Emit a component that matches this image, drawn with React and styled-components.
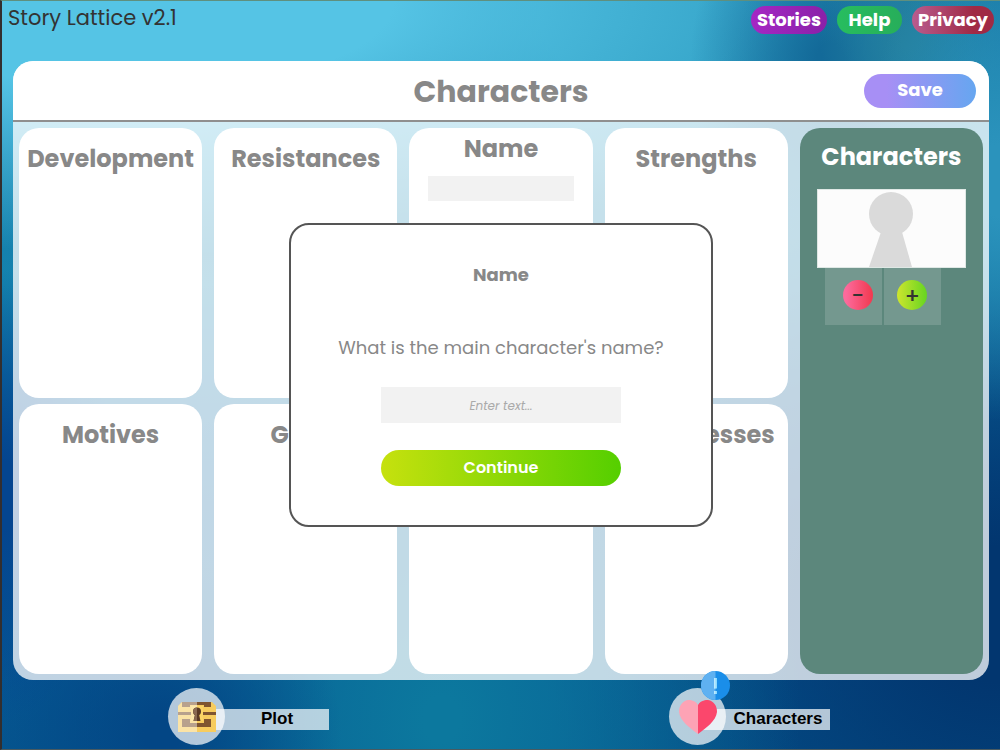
import React, { useState } from 'react'
import styled, { createGlobalStyle } from 'styled-components'

const GlobalStyle = createGlobalStyle`
  * {
    box-sizing: border-box;
  }

  body {
    margin: 0;
    font-family: Poppins, Inter, sans-serif;
    color: #888;
  }

  button, input {
    font-family: inherit;
  }
`

const Page = styled.div`
  position: relative;
  display: flex;
  flex-direction: column;
  min-height: 100vh;
  border: 1px solid #5f8f7e;
  border-left: 2px solid #332e2e;
  border-right: 0;
  border-bottom-color: #4a5a60;
  background:
    radial-gradient(ellipse 14% 32% at 100% 24%, #2b93bc 15%, transparent 100%),
    radial-gradient(ellipse 9% 16% at 91% 5%, #24809f 10%, transparent 100%),
    radial-gradient(ellipse 14% 24% at 83% 8%, #136a99 10%, transparent 100%),
    radial-gradient(ellipse 72% 34% at 14% 0%, #55c4e5 35%, transparent 100%),
    radial-gradient(ellipse 34% 30% at 64% 2%, #2e9dc2 30%, transparent 100%),
    radial-gradient(ellipse 12% 30% at 0% 66%, #04458f 15%, transparent 100%),
    radial-gradient(ellipse 18% 24% at 16% 98%, #034685 10%, transparent 100%),
    radial-gradient(ellipse 36% 60% at 44% 96%, #0c789e 5%, transparent 100%),
    radial-gradient(ellipse 46% 60% at 100% 82%, #02366f 15%, transparent 100%),
    linear-gradient(180deg, #1a7aa6 0%, #1482ae 38%, #06589a 70%, #05568f 100%);
`

const TopBar = styled.header`
  display: flex;
  justify-content: space-between;
  align-items: flex-start;
  height: 60px;
  padding: 5px 6px 0 6px;
`

const Brand = styled.span`
  font-size: 21px;
  line-height: 24px;
  color: #333;
`

const Nav = styled.nav`
  display: flex;
  gap: 10px;
`

const Pill = styled.button`
  min-width: 65px;
  height: 28px;
  padding: 0 6px;
  border: 0;
  border-radius: 14px;
  background: ${({ $bg }) => $bg};
  color: #fff;
  font-size: 18px;
  font-weight: 700;
  line-height: 28px;
  cursor: pointer;
`

const Panel = styled.main`
  flex: 1;
  display: flex;
  flex-direction: column;
  margin: 0 11px;
  border-radius: 20px;
  background: rgba(255, 255, 255, 0.75);
  overflow: hidden;
`

const PanelHeader = styled.div`
  display: grid;
  grid-template-columns: 1fr auto 1fr;
  align-items: center;
  height: 61px;
  padding: 0 13px;
  border-bottom: 2px solid #8f8f8f;
  background: #fff;
`

const PanelTitle = styled.h1`
  grid-column: 2;
  margin: 0;
  padding-top: 2px;
  font-size: 30px;
  font-weight: 700;
  line-height: 36px;
`

const SaveButton = styled.button`
  justify-self: end;
  width: 112px;
  height: 34px;
  padding: 0 0 2px;
  border: 0;
  border-radius: 17px;
  background: linear-gradient(90deg, #a78ff5 20%, #66a6f0);
  color: #fff;
  font-size: 18px;
  font-weight: 700;
  cursor: pointer;
`

const Board = styled.div`
  flex: 1;
  display: grid;
  grid-template-columns: repeat(5, minmax(0, 1fr));
  grid-template-rows: 1fr 1fr;
  gap: 6px 12px;
  padding: 6px;
`

const Card = styled.section`
  display: flex;
  flex-direction: column;
  align-items: center;
  grid-column: ${({ $col }) => $col};
  grid-row: ${({ $tall }) => ($tall ? '1 / 3' : 'auto')};
  padding-top: ${({ $tall }) => ($tall ? '6px' : '16px')};
  border-radius: 20px;
  background: #fff;
`

const CardTitle = styled.h2`
  margin: 0;
  font-size: 24px;
  font-weight: 700;
  line-height: 30px;
`

const NameInput = styled.input`
  width: 80%;
  height: 25px;
  margin-top: 12px;
  border: 0;
  background: #f2f2f2;
  text-align: center;
`

const Roster = styled.aside`
  grid-column: 5;
  grid-row: 1 / 3;
  padding: 14px 17px;
  border-radius: 20px;
  background: #5c877c;
  color: #fff;
`

const RosterTitle = styled(CardTitle)`
  text-align: center;
`

const Portrait = styled.div`
  display: flex;
  justify-content: center;
  height: 79px;
  margin-top: 17px;
  border: 1px solid #dfe8e5;
  background: #fcfcfc;
`

const RosterActions = styled.div`
  display: flex;
  gap: 2px;
  margin-left: 8px;
`

const ActionCell = styled.div`
  display: flex;
  justify-content: center;
  width: 57px;
  height: 57px;
  padding-top: 12px;
  padding-left: ${({ $indent }) => ($indent ? '9px' : '0')};
  background: rgba(255, 255, 255, 0.15);
`

const RoundButton = styled.button`
  width: 30px;
  height: 30px;
  padding: 0;
  border: 0;
  border-radius: 50%;
  background: ${({ $bg }) => $bg};
  color: #333;
  font-size: 22px;
  font-weight: 500;
  line-height: 32px;
  cursor: pointer;
`

const BottomBar = styled.footer`
  display: grid;
  grid-template-columns: 1fr 1fr;
  column-gap: 8px;
  justify-items: center;
  height: 69px;
  padding: 8px 4px 0 0;
`

const Tab = styled.a`
  position: relative;
  display: flex;
  align-items: center;
  width: 161px;
  height: 57px;
  color: #000;
  font-family: "Liberation Sans", Arial, sans-serif;
  font-size: 17px;
  font-weight: 700;
  text-decoration: none;
`

const TabIcon = styled.span`
  flex: none;
  display: flex;
  align-items: center;
  justify-content: center;
  width: 57px;
  height: 57px;
  border-radius: 50%;
  background: rgba(255, 255, 255, 0.7);
`

const TabLabel = styled.span`
  flex: 1;
  height: 21px;
  margin: 5px 0 0 -28px;
  padding-left: 28px;
  background: rgba(255, 255, 255, 0.7);
  line-height: 20px;
  text-align: center;
`

const TabArt = styled.svg`
  position: relative;
  z-index: 1;
`

const Badge = styled.svg`
  position: absolute;
  top: -17px;
  left: 32px;
  z-index: 2;
`

const Overlay = styled.div`
  position: absolute;
  inset: 0;
  display: flex;
  align-items: center;
  justify-content: center;
`

const Modal = styled.form`
  display: flex;
  flex-direction: column;
  align-items: center;
  width: 424px;
  padding: 38px 20px 39px;
  border: 2px solid #555;
  border-radius: 20px;
  background: #fff;
`

const ModalTitle = styled.h3`
  margin: 0;
  font-size: 18px;
  font-weight: 700;
  line-height: 24px;
`

const Question = styled.label`
  margin-top: 49px;
  font-size: 18px;
  line-height: 24px;
`

const Answer = styled.input`
  width: 240px;
  height: 36px;
  margin-top: 27px;
  padding: 2px 0 0;
  border: 0;
  background: #f2f2f2;
  color: #555;
  font-size: 12px;
  text-align: center;

  &::placeholder {
    color: #aaa;
    font-style: italic;
  }
`

const ContinueButton = styled.button`
  width: 240px;
  height: 36px;
  margin-top: 27px;
  padding: 0 0 2px;
  border: 0;
  border-radius: 18px;
  background: linear-gradient(90deg, #c6e10e, #55cf00);
  color: #fff;
  font-size: 16px;
  font-weight: 600;
  cursor: pointer;
`

const KeyholeFigure = () => (
  <svg width="60" height="77" viewBox="0 0 60 77" aria-hidden="true">
    <circle cx="30" cy="24" r="22" fill="#dadada" />
    <path d="M20 42h21l10 35H8z" fill="#dadada" />
  </svg>
)

const ChestIcon = () => (
  <TabArt width="38" height="30" viewBox="0 0 38 30" aria-hidden="true">
    <path d="M4 0h30l4 4v26H0V4z" fill="#f7cc5e" />
    <path d="M4 0h29v5h-7V3H12v2H4z" fill="#7f5530" />
    <path d="M0 10h13v3H0zM25 10h13v3H25z" fill="#7f5530" />
    <path d="M4 17h8v4h14v-4h7v8H4z" fill="#7f5530" />
    <path d="M13 4h12v15H13z" fill="#fbd566" />
    <path d="M4 0h15v30H0V4z" fill="#fff" opacity="0.45" />
    <circle cx="19" cy="9.500" r="4" fill="#5b3a24" />
    <path d="M17.500 10h3l2 9h-7z" fill="#5b3a24" />
    <path d="M19 5.500a4 4 0 0 0-1.800 7.500L15.500 19H19z" fill="#8a6a52" />
  </TabArt>
)

const HeartIcon = () => (
  <TabArt width="38" height="34" viewBox="0 0 38 34" aria-hidden="true">
    <path d="M19 5C16 0 11 0 9 0 3 1 0 6 0 12c1 9 11 16 19 22z" fill="#fda3b5" />
    <path d="M19 5c3-5 8-5 10-5 6 1 9 6 9 12-1 9-11 16-19 22z" fill="#fb476c" />
  </TabArt>
)

const AlertBadge = () => (
  <Badge width="29" height="29" viewBox="0 0 29 29" aria-hidden="true">
    <circle cx="14.5" cy="14.5" r="14.5" fill="#1a8ee9" />
    <path d="M14.500 0a14.500 14.500 0 0 0 0 29z" fill="#5fb1f1" />
    <path d="M13 7h3v10.500h-3zM13 20h3v3h-3z" fill="#8fdcff" />
    <path d="M13 7h1.500v10.500H13zM13 20h1.500v3H13z" fill="#bdeaff" />
  </Badge>
)

export default function App() {
  const [name, setName] = useState('')
  const [answer, setAnswer] = useState('')
  const [asking, setAsking] = useState(true)

  const handleSubmit = (e) => {
    e.preventDefault()
    setName(answer)
    setAsking(false)
  }

  return (
    <>
      <GlobalStyle />
      <Page>
        <TopBar>
          <Brand>Story Lattice v2.1</Brand>
          <Nav>
            <Pill $bg="linear-gradient(90deg, #a527c4, #8a20a8)">Stories</Pill>
            <Pill $bg="linear-gradient(90deg, #27bd5f, #27ae5a)">Help</Pill>
            <Pill $bg="linear-gradient(90deg, #b95c8e, #a02a45 75%)">Privacy</Pill>
          </Nav>
        </TopBar>

        <Panel>
          <PanelHeader>
            <PanelTitle>Characters</PanelTitle>
            <SaveButton>Save</SaveButton>
          </PanelHeader>
          <Board>
            <Card $col={1}>
              <CardTitle>Development</CardTitle>
            </Card>
            <Card $col={2}>
              <CardTitle>Resistances</CardTitle>
            </Card>
            <Card $col={3} $tall>
              <CardTitle>Name</CardTitle>
              <NameInput
                aria-label="Name"
                value={name}
                onChange={(e) => setName(e.target.value)}
              />
            </Card>
            <Card $col={4}>
              <CardTitle>Strengths</CardTitle>
            </Card>
            <Roster>
              <RosterTitle>Characters</RosterTitle>
              <Portrait>
                <KeyholeFigure />
              </Portrait>
              <RosterActions>
                <ActionCell $indent>
                  <RoundButton $bg="linear-gradient(90deg, #fc6a9c 10%, #f2384e)">-</RoundButton>
                </ActionCell>
                <ActionCell>
                  <RoundButton $bg="linear-gradient(90deg, #cde52e, #66d520)">+</RoundButton>
                </ActionCell>
              </RosterActions>
            </Roster>
            <Card $col={1}>
              <CardTitle>Motives</CardTitle>
            </Card>
            <Card $col={2}>
              <CardTitle>Goals</CardTitle>
            </Card>
            <Card $col={4}>
              <CardTitle>Weaknesses</CardTitle>
            </Card>
          </Board>
        </Panel>

        <BottomBar>
          <Tab href="#plot">
            <TabIcon>
              <ChestIcon />
            </TabIcon>
            <TabLabel>Plot</TabLabel>
          </Tab>
          <Tab href="#characters">
            <TabIcon>
              <HeartIcon />
            </TabIcon>
            <TabLabel>Characters</TabLabel>
            <AlertBadge />
          </Tab>
        </BottomBar>

        {asking && (
          <Overlay>
            <Modal onSubmit={handleSubmit}>
              <ModalTitle>Name</ModalTitle>
              <Question htmlFor="answer">What is the main character's name?</Question>
              <Answer
                id="answer"
                placeholder="Enter text..."
                autoComplete="off"
                value={answer}
                onChange={(e) => setAnswer(e.target.value)}
              />
              <ContinueButton type="submit">Continue</ContinueButton>
            </Modal>
          </Overlay>
        )}
      </Page>
    </>
  )
}
